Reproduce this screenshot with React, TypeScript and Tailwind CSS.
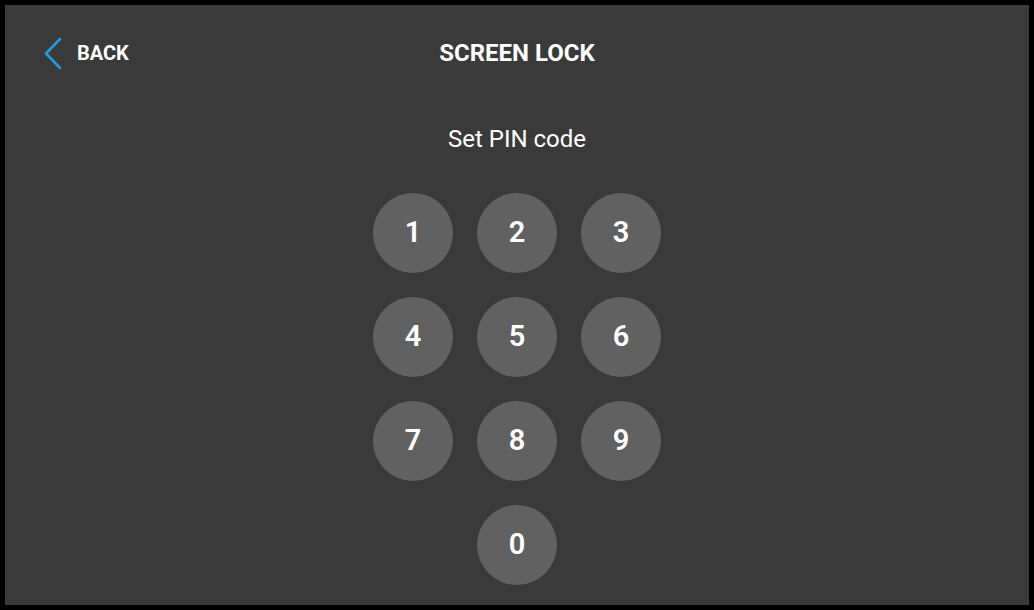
const digits = ["1", "2", "3", "4", "5", "6", "7", "8", "9"];

function Key({ label }: { label: string }) {
    return (
        <button
            type="button"
            className="flex h-[80px] w-[80px] items-center justify-center rounded-full bg-[#616161] text-[29px] font-semibold text-white"
        >
            {label}
        </button>
    );
}

export default function App() {
    return (
        <div
            className="h-[610px] w-[1034px] bg-black p-[5px]"
            style={{ fontFamily: "Roboto, 'Liberation Sans', sans-serif" }}
        >
            <div className="flex h-full w-full flex-col items-center bg-[#3a3a3a]">
                <header className="grid h-[96px] w-full grid-cols-[1fr_auto_1fr] items-center">
                    <button type="button" className="flex items-center gap-[15px] pl-[38px] text-white">
                        <svg width="19" height="33" viewBox="0 0 19 33" fill="none">
                            <path d="M17 2 L3 16.5 L17 31" stroke="#1e9be0" strokeWidth="2.6" strokeLinecap="round" strokeLinejoin="round" />
                        </svg>
                        <span className="text-[20px] font-bold">BACK</span>
                    </button>
                    <h1 className="text-[24px] font-bold text-white">SCREEN LOCK</h1>
                    <div />
                </header>

                <p className="mt-[24px] text-[24px] leading-[28px] text-white">Set PIN code</p>

                <div className="mt-[40px] grid grid-cols-[80px_80px_80px] gap-[24px]">
                    {digits.map((d) => (
                        <Key key={d} label={d} />
                    ))}
                    <div />
                    <Key label="0" />
                </div>
            </div>
        </div>
    );
}
